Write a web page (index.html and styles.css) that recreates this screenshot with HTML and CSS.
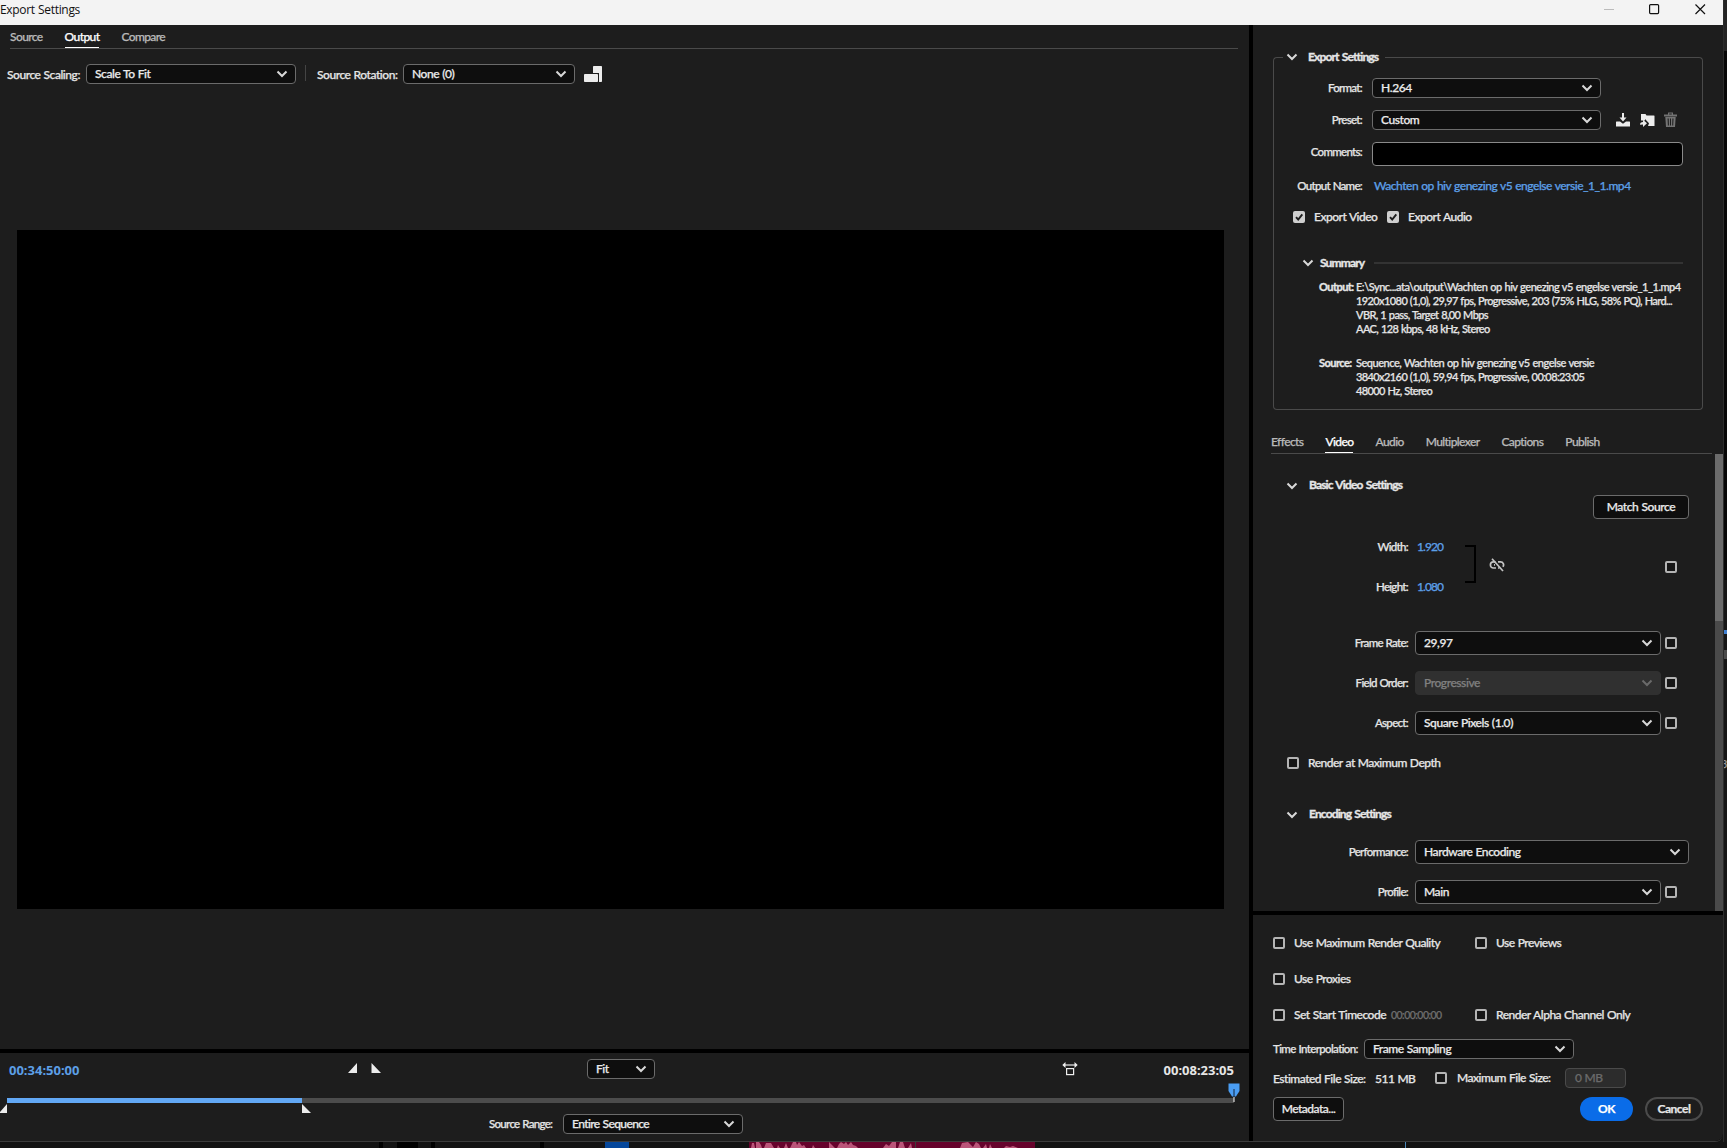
FILE: index.html
```
<!DOCTYPE html>
<html lang="en">
<head>
    <meta charset="UTF-8">
    <title>Export Settings</title>
    <link rel="stylesheet" href="styles.css">
</head>
<body>
    <svg class="defs" width="0" height="0">
        <symbol id="chevron" viewBox="0 0 12 8"><path d="M1.5 1.5 6 6l4.500-4.500" fill="none" stroke="currentColor" stroke-width="2"/></symbol>
        <symbol id="check" viewBox="0 0 12 12"><path d="M3 6.200 5.200 8.500 9.300 3.300" fill="none" stroke="#1d1d1d" stroke-width="1.900"/></symbol>
    </svg>

    <div class="desktop">
        <div class="window">
            <header class="titlebar">
                <span class="title">Export Settings</span>
                <svg class="win-buttons" width="103" height="12" viewBox="0 0 103 12">
                    <path d="M0 6.500h10" stroke="#bbb"/>
                    <rect x="45.600" y="1.600" width="9" height="9" rx="1" fill="none" stroke="#111" stroke-width="1.200"/>
                    <path d="M91.500 1.500l9.500 9.500M101 1.500 91.500 11" stroke="#111" stroke-width="1.200"/>
                </svg>
            </header>

            <div class="content">
                <section class="left">
                    <div class="preview-panel">
                        <nav class="tabs tabs-left">
                            <span class="tab">Source</span>
                            <span class="tab active">Output</span>
                            <span class="tab">Compare</span>
                        </nav>
                        <div class="scaling">
                            <label class="label scaling-label">Source Scaling:</label>
                            <div class="select s-scale">Scale To Fit <svg><use href="#chevron"/></svg></div>
                            <i class="separator"></i>
                            <label class="label rotation-label">Source Rotation:</label>
                            <div class="select s-rotation">None (0) <svg><use href="#chevron"/></svg></div>
                            <svg class="rotate-icon" width="18" height="16" viewBox="0 0 18 16">
                                <path d="M9 7V.8q0-.8.8-.8h7.400q.8 0 .8.8v14.400q0 .8-.8.8H15V7z" fill="#ececec"/>
                                <rect x="0" y="8" width="14" height="8" rx=".8" fill="#ececec"/>
                            </svg>
                        </div>
                        <div class="preview"></div>
                    </div>

                    <div class="timeline">
                        <div class="transport">
                            <span class="time current">00:34:50:00</span>
                            <svg class="markers" width="34" height="10" viewBox="0 0 34 10"><path d="M9 0v10H0zM23.500 0v10H33z" fill="#ececec"/></svg>
                            <div class="select s-fit">Fit <svg><use href="#chevron"/></svg></div>
                            <svg class="aspect-icon" width="16" height="14" viewBox="0 0 16 14">
                                <path d="M2 3h12" stroke="#eee" stroke-width="1.200"/>
                                <path d="M3.500 0v6L.3 3zM12.500 0v6l3.200-3z" fill="#eee"/>
                                <rect x="4.600" y="6.600" width="7" height="6" fill="none" stroke="#eee" stroke-width="1.200"/>
                            </svg>
                            <span class="time total">00:08:23:05</span>
                        </div>
                        <div class="track">
                            <div class="range"></div>
                            <svg class="in-marker" width="7" height="9" viewBox="0 0 7 9"><path d="M7 0v9H0V8z" fill="#ececec"/></svg>
                            <svg class="out-marker" width="9" height="9" viewBox="0 0 9 9"><path d="M0 0v9h9z" fill="#ececec"/></svg>
                            <svg class="playhead" width="12" height="20" viewBox="0 0 12 20">
                                <path d="M.5.500h11V8L8 13.500H4L.5 8z" fill="#4a9df3"/>
                                <path d="M6 6v8" stroke="#10233b"/><path d="M6 14v5" stroke="#fff"/>
                            </svg>
                        </div>
                        <div class="source-range">
                            <label class="label">Source Range:</label>
                            <div class="select s-range">Entire Sequence <svg><use href="#chevron"/></svg></div>
                        </div>
                    </div>
                </section>

                <section class="right">
                    <div class="settings">
                        <div class="group">
                            <div class="group-head">
                                <i class="corner"></i>
                                <svg class="chev"><use href="#chevron"/></svg>
                                <b>Export Settings</b>
                                <i class="rule"></i>
                            </div>
                            <div class="group-body">
                                <div class="row format">
                                    <label class="label">Format:</label>
                                    <div class="select s-format">H.264 <svg><use href="#chevron"/></svg></div>
                                </div>
                                <div class="row preset">
                                    <label class="label">Preset:</label>
                                    <div class="select s-format">Custom <svg><use href="#chevron"/></svg></div>
                                    <svg class="preset-icons" width="64" height="16" viewBox="0 0 64 16">
                                        <g fill="#ececec">
                                            <path d="M7 1h2v4.500h2.500L8 9.500 4.500 5.500H7z"/>
                                            <path d="M1.500 9.500H5l3 2.300 3-2.300h3.500q.5 0 .5.500v4.500H1V10q0-.5.5-.5z"/>
                                            <path d="M26 2h4.500l1 1.500H39q.5 0 .5.500v10H33l1-2.700L30 7V8.500h-4z"/>
                                            <path d="M25 12.800q0-2.800 3-2.800V7.700l4 3.600-4 3.700v-2.500q-2 0-3 .3z"/>
                                        </g>
                                        <g fill="#737373">
                                            <path d="M49 2.500h4V.500h5v2h4v2H49zM54.200 1.500v1h2.600v-1z" fill-rule="evenodd"/>
                                            <path d="M50.300 5h10.400l-.7 10h-9zM52.600 6.500l.3 7h1l-.2-7zM55 6.500v7h1v-7zM57.400 6.500l-.2 7h1l.3-7z" fill-rule="evenodd"/>
                                        </g>
                                    </svg>
                                </div>
                                <div class="row comments">
                                    <label class="label">Comments:</label>
                                    <div class="textbox"></div>
                                </div>
                                <div class="row output-name">
                                    <label class="label">Output Name:</label>
                                    <a class="link">Wachten op hiv genezing v5 engelse versie_1_1.mp4</a>
                                </div>
                                <div class="export-checks">
                                    <i class="cb checked"><svg><use href="#check"/></svg></i><span>Export Video</span>
                                    <i class="cb checked"><svg><use href="#check"/></svg></i><span>Export Audio</span>
                                </div>
                                <div class="summary-head">
                                    <svg class="chev"><use href="#chevron"/></svg>
                                    <b>Summary</b>
                                    <i></i>
                                </div>
                                <div class="summary">
                                    <b>Output:</b>
                                    <div>
                                        <p class="path">E:\Sync...ata\output\Wachten op hiv genezing v5 engelse versie_1_1.mp4</p>
                                        <p>1920x1080 (1,0), 29,97 fps, Progressive, 203 (75% HLG, 58% PQ), Hard...</p>
                                        <p>VBR, 1 pass, Target 8,00 Mbps</p>
                                        <p>AAC, 128 kbps, 48 kHz, Stereo</p>
                                    </div>
                                    <b>Source:</b>
                                    <div>
                                        <p class="path">Sequence, Wachten op hiv genezing v5 engelse versie</p>
                                        <p>3840x2160 (1,0), 59,94 fps, Progressive, 00:08:23:05</p>
                                        <p>48000 Hz, Stereo</p>
                                    </div>
                                </div>
                            </div>
                        </div>

                        <nav class="tabs tabs-right">
                            <span class="tab">Effects</span>
                            <span class="tab active">Video</span>
                            <span class="tab">Audio</span>
                            <span class="tab">Multiplexer</span>
                            <span class="tab">Captions</span>
                            <span class="tab">Publish</span>
                        </nav>

                        <div class="scroll">
                            <div class="video">
                                <div class="section-head basic"><svg class="chev"><use href="#chevron"/></svg><b>Basic Video Settings</b></div>
                                <div class="match"><div class="button">Match Source</div></div>
                                <div class="size">
                                    <div class="size-fields">
                                        <label class="label">Width:</label><a class="link">1.920</a>
                                        <label class="label">Height:</label><a class="link">1.080</a>
                                    </div>
                                    <i class="bracket"></i>
                                    <svg class="unlink" width="16" height="14" viewBox="0 0 16 14" fill="none" stroke="#c4c4c4" stroke-width="1.700">
                                        <path d="M6.500 3.800H4.500a3 3 0 0 0 0 6.200H7M9 3.800h2.500a3 3 0 0 1 2.300 5M9 10h1.500M5 6.900h1"/>
                                        <path d="M3 .8 14 13"/>
                                    </svg>
                                    <i class="cb"></i>
                                </div>
                                <div class="vrow frame"><label class="label">Frame Rate:</label><div class="select">29,97 <svg><use href="#chevron"/></svg></div><i class="cb"></i></div>
                                <div class="vrow"><label class="label">Field Order:</label><div class="select disabled">Progressive <svg><use href="#chevron"/></svg></div><i class="cb"></i></div>
                                <div class="vrow"><label class="label">Aspect:</label><div class="select">Square Pixels (1.0) <svg><use href="#chevron"/></svg></div><i class="cb"></i></div>
                                <div class="max-depth"><i class="cb"></i><span>Render at Maximum Depth</span></div>
                                <div class="section-head encoding"><svg class="chev"><use href="#chevron"/></svg><b>Encoding Settings</b></div>
                                <div class="vrow"><label class="label">Performance:</label><div class="select wide">Hardware Encoding <svg><use href="#chevron"/></svg></div></div>
                                <div class="vrow"><label class="label">Profile:</label><div class="select">Main <svg><use href="#chevron"/></svg></div><i class="cb"></i></div>
                            </div>
                            <div class="scrollbar"><div class="thumb"></div></div>
                        </div>
                    </div>

                    <div class="options">
                        <div class="checks">
                            <div class="check"><i class="cb"></i><span>Use Maximum Render Quality</span></div>
                            <div class="check"><i class="cb"></i><span>Use Previews</span></div>
                            <div class="check"><i class="cb"></i><span>Use Proxies</span></div>
                            <div></div>
                            <div class="check"><i class="cb"></i><span>Set Start Timecode</span><span class="start-tc">00:00:00:00</span></div>
                            <div class="check"><i class="cb"></i><span>Render Alpha Channel Only</span></div>
                        </div>
                        <div class="interpolation">
                            <label class="label">Time Interpolation:</label>
                            <div class="select s-interp">Frame Sampling <svg><use href="#chevron"/></svg></div>
                        </div>
                        <div class="filesize">
                            <span class="est">Estimated File Size:</span>
                            <span class="mb">511 MB</span>
                            <i class="cb"></i>
                            <span class="max">Maximum File Size:</span>
                            <div class="size-input">0 MB</div>
                        </div>
                        <div class="buttons">
                            <div class="button metadata">Metadata...</div>
                            <div class="pill ok">OK</div>
                            <div class="pill cancel">Cancel</div>
                        </div>
                    </div>
                </section>
            </div>
        </div>

        <!-- parts of the editor that show behind the dialog -->
        <aside class="edge">
            <i class="edge-top"></i>
            <i class="edge-gap"></i>
            <i class="edge-blue"></i>
            <i class="edge-grey"></i>
            <span class="edge-text">3</span>
        </aside>
        <svg class="behind" width="1727" height="6" viewBox="0 0 1727 6">
            <path d="M379 0h4v6h-4zM397 0h21v6h-21zM431 0h4v6h-4zM540 0h4v6h-4z" fill="#000"/>
            <path d="M605 0h24v6h-24z" fill="#05479b"/>
            <path d="M749 0h286v6h-286z" fill="#66032c"/>
            <path d="M751 6l1-5 2 0 1 5zM756 6l0-6 3 0 2 3 1 3zM764 6l2-5h5l3 5zM777 6l1-3 2 3zM784 6l2-5 2 5zM790 6l3-6h3l1 3 2-3 3 4 2-1 2 3zM812 6l1-3 2 3zM829 6l0-6 3 3 3 3zM837 6l2-4 2-2 3 2 2-2 2 3 3-3 2 3 3 1 2 2zM883 6l3-4 3 2 3-4 4 0 0 6zM898 6l2-6 3 0 2 6zM908 6l3-5 1 5zM960 6l2-5 6-1 5 5 3-5 3 2 2 4zM983 6l3-4 1 4zM989 6l1-4 2 4zM1004 6l2-2 4 1 3-1 5 2z" fill="#ba5579"/>
            <path d="M915.500 0v6" stroke="#3b3b3b"/>
            <path d="M1405.500 0v6" stroke="#4b87b8"/>
        </svg>
    </div>
</body>
</html>
```
FILE: styles.css
```
* {
    box-sizing: border-box;
}
body {
    margin: 0;
    background: #131313;
    color: #e6e6e6;
    font-family: "Lato", "Noto Sans", sans-serif;
    font-size: 12px;
    font-weight: 500;
    line-height: 14px;
    letter-spacing: -0.5px;
    word-spacing: 0.5px;
    white-space: nowrap;
    -webkit-text-stroke: 0.25px;
}
i {
    font-style: normal;
    flex: none;
}
p {
    margin: 0;
}
b {
    letter-spacing: -0.85px;
    word-spacing: 1px;
    -webkit-text-stroke: 0.35px;
}
svg {
    display: block;
    flex: none;
}
.defs {
    position: absolute;
}
.desktop {
    display: grid;
    grid-template-columns: 1723px 4px;
    grid-template-rows: 1142px 6px;
    width: 1727px;
    height: 1148px;
    overflow: hidden;
}
.window {
    display: flex;
    flex-direction: column;
    background: #1d1d1d;
    border-bottom: 1px solid #3c3c3c;
    border-bottom-right-radius: 8px;
    overflow: hidden;
}
.titlebar {
    display: flex;
    justify-content: space-between;
    height: 25px;
    padding: 3px 16px 0 0;
    background: #f3f3f3;
    color: #111;
}
.title {
    font-family: "Open Sans", sans-serif;
    font-weight: 400;
    letter-spacing: -0.32px;
    -webkit-text-stroke: 0;
}
.content {
    display: flex;
    flex: 1;
    gap: 4px;
    background: #000;
}
.left {
    display: flex;
    flex-direction: column;
    width: 1249px;
    gap: 4px;
}
.right {
    display: flex;
    flex-direction: column;
    width: 470px;
    gap: 4px;
}
.preview-panel {
    height: 1024px;
    background: #1d1d1d;
}
/* tabs */
.tabs {
    display: flex;
    border-bottom: 1px solid #4a4a4a;
}
.tab {
    height: 18px;
    color: #b9b9b9;
    letter-spacing: -0.6px;
}
.tab.active {
    color: #fff;
    border-bottom: 1px solid #fff;
}
.tabs-left {
    gap: 22px;
    height: 19px;
    margin: 0 11px 0 10px;
    position: relative;
    top: 5px;
}
/* controls */
.select {
    display: flex;
    align-items: center;
    justify-content: space-between;
    height: 20px;
    padding: 0 7px 0 8px;
    border: 1px solid #6b6b6b;
    border-radius: 4px;
    background: #0e0e0e;
    color: #ebebeb;
    letter-spacing: -0.43px;
}
.select svg, .chev {
    width: 12px;
    height: 8px;
    color: #d8d8d8;
}
.cb {
    display: block;
    width: 12px;
    height: 12px;
    border: 2px solid #b4b4b4;
    border-radius: 2px;
    background: #161616;
}
.cb.checked {
    border: 0;
    background: #cfcfcf;
}
.cb svg {
    width: 12px;
    height: 12px;
}
.button {
    display: flex;
    align-items: center;
    justify-content: center;
    height: 24px;
    border: 1px solid #6b6b6b;
    border-radius: 4px;
    background: #0e0e0e;
    color: #ebebeb;
}
.label {
    font-size: 11.5px;
    letter-spacing: -0.7px;
}
.link {
    color: #5c9fe6;
}
/* source scaling bar */
.scaling {
    display: flex;
    align-items: center;
    height: 20px;
    margin: 20px 0 0 7px;
}
.scaling .label {
    padding-top: 2px;
    font-size: 12px;
    letter-spacing: -0.45px;
}
.scaling-label {
    width: 79px;
}
.s-scale {
    width: 210px;
}
.separator {
    width: 1px;
    height: 16px;
    margin: 0 11px 3px 9px;
    background: #444;
}
.rotation-label {
    width: 86px;
}
.s-rotation {
    width: 172px;
}
.rotate-icon {
    margin-left: 9px;
}
.preview {
    width: 1207px;
    height: 679px;
    margin: 146px 0 0 17px;
    background: #000;
}
/* timeline */
.timeline {
    height: 88px;
    background: #1d1d1d;
}
.transport {
    display: flex;
    align-items: center;
    height: 34px;
    padding: 0 15px 0 9px;
}
.time {
    margin-bottom: 1px;
    font-family: "Noto Sans", sans-serif;
    font-size: 13px;
    font-weight: 700;
    letter-spacing: 0;
    -webkit-text-stroke: 0;
}
.current {
    width: 339px;
    color: #5c9fe6;
}
.markers {
    margin-bottom: 4px;
}
.s-fit {
    width: 68px;
    margin: 0 0 2px 205px;
}
.aspect-icon {
    margin: 0 0 2px 407px;
}
.total {
    margin-left: auto;
}
.track {
    position: relative;
    width: 1227px;
    height: 5px;
    margin: 11px 0 0 7px;
    background: #4c4c4c;
}
.range {
    width: 295px;
    height: 5px;
    background: #62a8f5;
}
.in-marker, .out-marker, .playhead {
    position: absolute;
}
.in-marker {
    left: -7px;
    top: 6px;
}
.out-marker {
    left: 295px;
    top: 6px;
}
.playhead {
    left: 1221px;
    top: -15px;
}
.source-range {
    display: flex;
    align-items: center;
    gap: 11px;
    margin: 11px 0 0 489px;
}
.source-range .label {
    width: 63px;
}
.s-range {
    width: 180px;
    letter-spacing: -0.6px;
}
/* export settings */
.settings {
    display: flex;
    flex-direction: column;
    height: 886px;
    background: #1d1d1d;
}
.group {
    width: 430px;
    height: 359px;
    margin: 26px 0 0 20px;
}
.group-head {
    display: flex;
    align-items: center;
    height: 12px;
}
.corner, .rule {
    align-self: flex-end;
    height: 6px;
    border-top: 1px solid #4a4a4a;
}
.corner {
    width: 10px;
    margin-right: 3px;
    border-left: 1px solid #4a4a4a;
    border-top-left-radius: 4px;
}
.rule {
    flex: 1;
    margin-left: 8px;
    border-right: 1px solid #4a4a4a;
    border-top-right-radius: 4px;
}
.group-head b {
    width: 69px;
    margin-left: 10px;
}
.group-body {
    height: 347px;
    padding-top: 15px;
    border: 1px solid #4a4a4a;
    border-top: 0;
    border-radius: 0 0 4px 4px;
}
.row {
    display: flex;
    align-items: center;
    height: 20px;
    margin-bottom: 12px;
}
.row .label {
    width: 88px;
    margin-right: 10px;
    text-align: right;
}
.s-format {
    width: 229px;
}
.preset-icons {
    margin-left: 14px;
}
.textbox {
    width: 311px;
    height: 24px;
    margin-top: 4px;
    border: 1px solid #8a8a8a;
    border-radius: 4px;
    background: #000;
}
.output-name {
    margin: 14px 0 14px;
}
.output-name .link {
    margin-left: 2px;
    letter-spacing: -0.48px;
}
.export-checks {
    display: flex;
    align-items: center;
    height: 14px;
    padding-left: 19px;
}
.export-checks span {
    width: 73px;
    margin-left: 9px;
}
.summary-head {
    display: flex;
    align-items: center;
    height: 14px;
    margin: 32px 19px 0 28px;
}
.summary-head b {
    width: 54px;
    margin-left: 6px;
}
.summary-head i {
    flex: 1;
    height: 2px;
    background: #333;
}
.summary {
    display: grid;
    grid-template-columns: 37px auto;
    row-gap: 20px;
    margin: 10px 0 0 45px;
    font-size: 11px;
    letter-spacing: -0.6px;
}
.summary b {
    letter-spacing: -0.55px;
}
.path {
    letter-spacing: -0.48px;
}
.tabs-right {
    gap: 22px;
    height: 19px;
    margin: 25px 11px 0 18px;
}
/* video tab */
.scroll {
    display: flex;
    flex: 1;
    overflow: hidden;
}
.video {
    width: 462px;
}
.scrollbar {
    width: 8px;
    background: #4a4a4a;
}
.thumb {
    height: 167px;
    background: #6b6b6b;
}
.section-head {
    display: flex;
    align-items: center;
    height: 14px;
    padding-left: 33px;
}
.section-head b {
    margin-left: 11px;
}
.section-head .chev {
    margin-top: 2px;
}
.basic {
    margin-top: 24px;
}
.match {
    display: flex;
    justify-content: flex-end;
    margin: 3px 26px 0 0;
}
.match .button {
    width: 96px;
    letter-spacing: -0.4px;
}
.size {
    display: flex;
    align-items: center;
    height: 54px;
    margin-top: 21px;
    padding-left: 62px;
}
.size-fields {
    display: grid;
    grid-template-columns: 93px 48px;
    column-gap: 9px;
    row-gap: 26px;
}
.size-fields .label {
    text-align: right;
}
.size-fields .link {
    letter-spacing: -0.9px;
}
.bracket {
    width: 11px;
    height: 38px;
    margin-bottom: 6px;
    border: 2px solid #000;
    border-left: 0;
}
.unlink {
    margin: 0 0 5px 13px;
}
.size .cb {
    margin-left: 160px;
}
.vrow {
    display: flex;
    align-items: center;
    height: 24px;
    margin-bottom: 16px;
}
.vrow .label {
    width: 155px;
    text-align: right;
}
.vrow .select {
    width: 246px;
    height: 24px;
    margin: 0 4px 0 7px;
}
.vrow .select.wide {
    width: 274px;
}
.frame {
    margin-top: 37px;
}
.select.disabled {
    border-color: #303030;
    background: #303030;
    color: #808080;
}
.disabled svg {
    color: #6a6a6a;
}
.max-depth {
    display: flex;
    align-items: center;
    gap: 9px;
    height: 24px;
    padding-left: 34px;
}
.encoding {
    margin: 32px 0 19px;
}
/* render options */
.options {
    height: 226px;
    padding: 19px 20px 0;
    background: #1d1d1d;
}
.checks {
    display: grid;
    grid-template-columns: 202px auto;
    grid-auto-rows: 18px;
    row-gap: 18px;
}
.check {
    display: flex;
    align-items: center;
    gap: 9px;
}
.start-tc {
    color: #6f6f6f;
    font-size: 10.5px;
    letter-spacing: -0.55px;
    margin-left: -4px;
}
.interpolation {
    display: flex;
    align-items: center;
    margin-top: 15px;
}
.interpolation .label {
    width: 91px;
    letter-spacing: -0.63px;
}
.s-interp {
    width: 210px;
}
.filesize {
    display: flex;
    align-items: center;
    height: 20px;
    margin-top: 9px;
}
.est {
    width: 102px;
    padding-top: 2px;
}
.mb {
    width: 60px;
    padding-top: 2px;
}
.max {
    width: 108px;
    margin-left: 10px;
}
.size-input {
    width: 61px;
    height: 20px;
    padding: 2px 9px;
    border: 1px solid #4a4a4a;
    border-radius: 4px;
    background: #2c2c2c;
    color: #6a6a6a;
}
.buttons {
    display: flex;
    margin-top: 9px;
}
.metadata {
    width: 71px;
    margin-right: auto;
}
.pill {
    display: flex;
    align-items: center;
    justify-content: center;
    height: 24px;
    border-radius: 12px;
    font-weight: 700;
}
.ok {
    width: 53px;
    background: #0a6ce8;
    color: #fff;
}
.cancel {
    width: 58px;
    margin-left: 12px;
    border: 2px solid #4b4b4b;
}
/* editor behind the dialog */
.edge {
    display: flex;
    flex-direction: column;
    background: #161616;
    border-left: 1px solid #2c2c2c;
    overflow: hidden;
}
.edge i {
    display: block;
    margin-left: -1px;
}
.edge-top {
    height: 51px;
    background: #242424;
}
.edge-gap {
    height: 529px;
    background: #070707;
}
.edge-blue {
    height: 4px;
    margin-top: 50px;
    background: #3f7fd0;
}
.edge-grey {
    height: 9px;
    margin-top: 16px;
    background: #4a4a4a;
}
.edge-text {
    margin: 98px 0 0 -3px;
    color: #999;
    font-size: 11px;
}
.behind {
    grid-column: span 2;
}
```
